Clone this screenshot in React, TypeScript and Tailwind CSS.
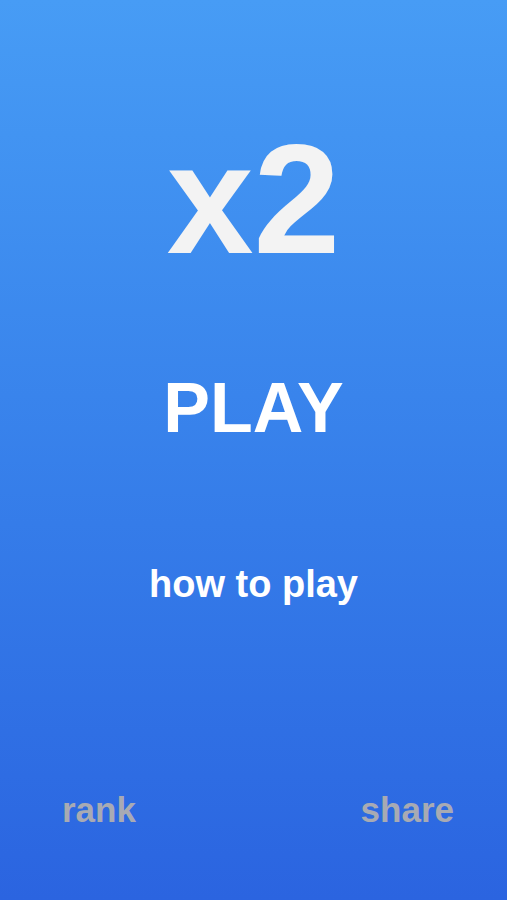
import React from "react";

export default function App() {
  return (
    <div
      className="w-[507px] h-[900px] flex flex-col items-center bg-gradient-to-b from-[#479cf5] to-[#2b64e0] overflow-hidden"
      style={{ fontFamily: '"Liberation Sans", Arial, sans-serif' }}
    >
      <div className="mt-[121px] h-[156px] text-[156px] leading-none font-bold text-[#f3f3f3]">
        x2
      </div>
      <div className="mt-[96px] h-[70px] text-[70px] leading-none font-bold text-white">
        PLAY
      </div>
      <div className="mt-[122px] h-[38px] text-[38px] leading-none font-bold text-white">
        how to play
      </div>
      <div className="mt-[189px] w-full flex justify-between pl-[62px] pr-[53px] text-[35px] leading-none font-bold text-[#a8aab3]">
        <span>rank</span>
        <span>share</span>
      </div>
    </div>
  );
}
